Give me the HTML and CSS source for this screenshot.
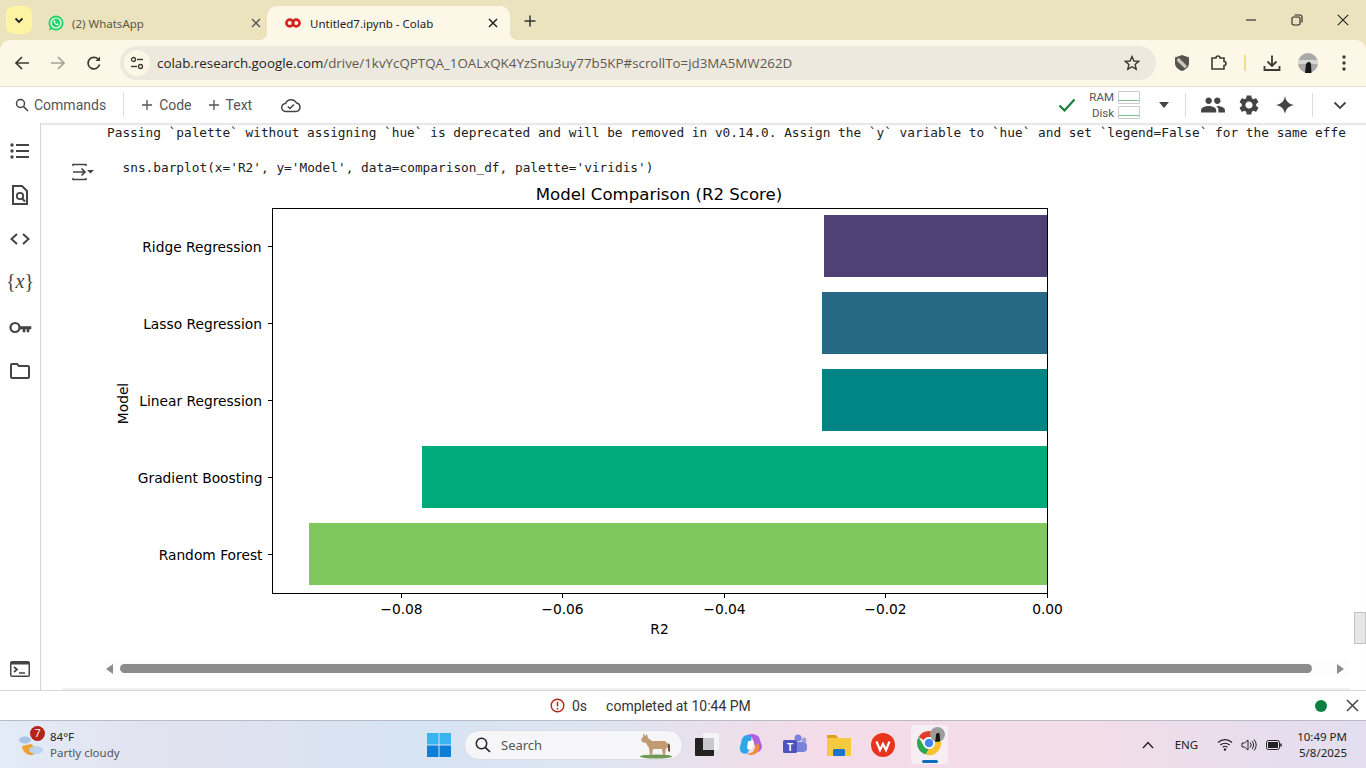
FILE: index.html
```html
<!DOCTYPE html>
<html lang="en">
<head>
    <meta charset="UTF-8">
    <meta name="viewport" content="width=device-width, initial-scale=1.0">
    <title>Untitled7.ipynb - Colab</title>
    <link rel="stylesheet" href="styles.css">
</head>
<body>

    <!-- Browser tabs -->
    <div class="tabstrip">
        <div class="tab-menu">
            <svg width="12" height="12" viewBox="0 0 12 12"><path d="M2.5 4.5 6 8l3.5-3.5" fill="none" stroke="#222" stroke-width="1.8"/></svg>
        </div>
        <div class="tab">
            <svg class="tab-icon" width="16" height="16" viewBox="0 0 16 16"><circle cx="8" cy="8" r="7.5" fill="#25d366"/><path d="M1 15.500 2.500 10.500 5.500 13.500Z" fill="#25d366"/><circle cx="8" cy="8" r="5" fill="none" stroke="#fff" stroke-width="1.2"/><path d="M5.800 5.600c.5-.6 1-.5 1.200 0l.4.9-.5.7c.4.8 1 1.300 1.800 1.700l.7-.6.9.5c.4.3.4.7 0 1.100-1.600 1.200-5.600-1.800-4.500-4.300Z" fill="#fff"/></svg>
            <span class="tab-title">(2) WhatsApp</span>
            <svg class="tab-close" width="10" height="10" viewBox="0 0 10 10"><path d="M1 1l8 8M9 1l-8 8" stroke="#555" stroke-width="1.4"/></svg>
        </div>
        <div class="tab active">
            <svg class="tab-icon" width="16" height="12" viewBox="0 0 16 12"><circle cx="4.800" cy="6" r="3.400" fill="none" stroke="#d3231c" stroke-width="2.600"/><circle cx="11.200" cy="6" r="3.400" fill="none" stroke="#d3231c" stroke-width="2.600"/></svg>
            <span class="tab-title">Untitled7.ipynb - Colab</span>
            <svg class="tab-close" width="10" height="10" viewBox="0 0 10 10"><path d="M1 1l8 8M9 1l-8 8" stroke="#222" stroke-width="1.5"/></svg>
        </div>
        <svg class="tab-new" width="12" height="12" viewBox="0 0 12 12"><path d="M6 .5v11M.5 6h11" stroke="#333" stroke-width="1.5"/></svg>
        <div class="win-controls">
            <svg width="12" height="12" viewBox="0 0 12 12"><path d="M1 6h10" stroke="#222" stroke-width="1.1"/></svg>
            <svg width="12" height="12" viewBox="0 0 12 12"><rect x="1" y="3" width="8" height="8" rx="1.500" fill="none" stroke="#222" stroke-width="1.1"/><path d="M3.500 1h5.500a2 2 0 0 1 2 2v5.500" fill="none" stroke="#222" stroke-width="1.1"/></svg>
            <svg width="12" height="12" viewBox="0 0 12 12"><path d="M.8.8l10.400 10.400M11.200.8.8 11.200" stroke="#222" stroke-width="1.1"/></svg>
        </div>
    </div>

    <!-- Address bar -->
    <div class="browserbar">
        <svg class="nav-icon" width="16" height="16" viewBox="0 0 16 16"><path d="M15 8H2M8 2 2 8l6 6" fill="none" stroke="#3d3a30" stroke-width="1.7"/></svg>
        <svg class="nav-icon" width="16" height="16" viewBox="0 0 16 16"><path d="M1 8h13M8 2l6 6-6 6" fill="none" stroke="#a5a294" stroke-width="1.7"/></svg>
        <svg class="nav-icon" width="16" height="16" viewBox="0 0 16 16"><path d="M13.500 9.500A5.800 5.800 0 1 1 12 4l1.500 1.500" fill="none" stroke="#3d3a30" stroke-width="1.7"/><path d="M14 1.500V6H9.500Z" fill="#3d3a30"/></svg>
        <div class="omnibox">
            <div class="site-info">
                <svg width="14" height="14" viewBox="0 0 14 14"><circle cx="3.500" cy="3.500" r="2" fill="none" stroke="#3d3a30" stroke-width="1.300"/><path d="M7 3.500h6" stroke="#3d3a30" stroke-width="1.400"/><circle cx="10.500" cy="10.500" r="2" fill="none" stroke="#3d3a30" stroke-width="1.300"/><path d="M1 10.500h6" stroke="#3d3a30" stroke-width="1.400"/></svg>
            </div>
            <span class="url">colab.research.google.com<span class="url-path">/drive/1kvYcQPTQA_1OALxQK4YzSnu3uy77b5KP#scrollTo=jd3MA5MW262D</span></span>
            <svg class="star" width="16" height="16" viewBox="0 0 16 16"><path d="M8 1.500 9.900 6l4.800.4-3.600 3.100 1.100 4.700L8 11.700l-4.200 2.500 1.100-4.700L1.300 6.400 6.100 6Z" fill="none" stroke="#3d3a30" stroke-width="1.400"/></svg>
        </div>
        <svg class="ext-shield" width="16" height="18" viewBox="0 0 16 18"><path d="M8 1 15 3.500V9c0 4-3 6.500-7 8-4-1.500-7-4-7-8V3.500Z" fill="#55534c"/><path d="M3 5l2-1 8 8-2 2.500L3 7Z" fill="#c9c7c0"/></svg>
        <svg class="ext-puzzle" width="18" height="18" viewBox="0 0 18 18"><path d="M2 4h4a2 2 0 0 1 4 0h4v3.500a2 2 0 0 1 0 4V15H2Z" fill="none" stroke="#3d3a30" stroke-width="1.600"/></svg>
        <span class="bar-sep"></span>
        <svg class="ext-down" width="18" height="18" viewBox="0 0 18 18"><path d="M9 1.500v10M4.500 7.500 9 12l4.500-4.500M1.500 12v4h15v-4" fill="none" stroke="#3d3a30" stroke-width="1.800"/></svg>
        <svg class="avatar" width="20" height="20" viewBox="0 0 20 20"><circle cx="10" cy="10" r="10" fill="#a9aaa8"/><path d="M0 9h20" stroke="#d6d6d4" stroke-width="4"/><path d="M7 20 8 11c2-3 5-2 5 0l.5 9Z" fill="#161616"/></svg>
        <svg class="kebab" width="4" height="16" viewBox="0 0 4 16"><circle cx="2" cy="2" r="1.700" fill="#3d3a30"/><circle cx="2" cy="8" r="1.700" fill="#3d3a30"/><circle cx="2" cy="14" r="1.700" fill="#3d3a30"/></svg>
    </div>

    <!-- Colab toolbar -->
    <div class="colabbar">
        <svg class="cmd-icon" width="14" height="14" viewBox="0 0 14 14"><circle cx="5.500" cy="5.500" r="4" fill="none" stroke="#444" stroke-width="1.500"/><path d="M8.500 8.500 13 13" stroke="#444" stroke-width="1.600"/></svg>
        <span class="bar-label">Commands</span>
        <span class="colab-sep"></span>
        <svg class="plus-code" width="10" height="10" viewBox="0 0 10 10"><path d="M5 0v10M0 5h10" stroke="#555" stroke-width="1.300"/></svg>
        <span class="bar-label plus-label">Code</span>
        <svg class="plus-text" width="10" height="10" viewBox="0 0 10 10"><path d="M5 0v10M0 5h10" stroke="#555" stroke-width="1.300"/></svg>
        <span class="bar-label plus-label">Text</span>
        <svg class="cloud" width="20" height="16" viewBox="0 0 20 16"><path d="M5 14.500a4 4 0 0 1-.5-8A6 6 0 0 1 15.500 6a4.300 4.300 0 0 1-.5 8.500Z" fill="none" stroke="#444" stroke-width="1.500"/><path d="M6.800 9.500 9 11.500l4-4" fill="none" stroke="#444" stroke-width="1.500"/></svg>
        <svg class="conn-check" width="18" height="14" viewBox="0 0 18 14"><path d="M1.500 7.500 6.500 12.500 16.500 1.500" fill="none" stroke="#188038" stroke-width="2.200"/></svg>
        <div class="ram-disk">
            <div class="meter-row"><span>RAM</span><span class="meter"></span></div>
            <div class="meter-row"><span>Disk</span><span class="meter"></span></div>
        </div>
        <svg class="caret" width="10" height="6" viewBox="0 0 10 6"><path d="M0 0h10L5 6Z" fill="#444"/></svg>
        <span class="colab-sep sep-a"></span>
        <svg class="tool-people" width="26" height="26" viewBox="0 0 24 24"><path fill="#444" d="M16 11c1.660 0 2.990-1.340 2.990-3S17.660 5 16 5c-1.660 0-3 1.340-3 3s1.340 3 3 3zm-8 0c1.660 0 2.990-1.340 2.990-3S9.660 5 8 5C6.340 5 5 6.340 5 8s1.340 3 3 3zm0 2c-2.330 0-7 1.170-7 3.500V19h14v-2.500c0-2.330-4.670-3.500-7-3.500zm8 0c-.29 0-.62.02-.97.05 1.160.84 1.970 1.970 1.970 3.450V19h6v-2.500c0-2.330-4.670-3.500-7-3.500z"/></svg>
        <svg class="tool-gear" width="24" height="24" viewBox="0 0 24 24"><path fill="#444" d="M19.140 12.940c.04-.3.06-.61.06-.94 0-.32-.02-.64-.07-.94l2.030-1.580c.18-.14.23-.41.12-.61l-1.920-3.320c-.12-.22-.37-.29-.59-.22l-2.390.96c-.5-.38-1.030-.7-1.620-.94l-.36-2.540c-.04-.24-.24-.41-.48-.41h-3.840c-.24 0-.43.17-.47.41l-.36 2.540c-.59.24-1.130.57-1.620.94l-2.390-.96c-.22-.08-.47 0-.59.22L2.740 8.870c-.12.21-.08.47.12.61l2.030 1.580c-.05.3-.09.63-.09.94s.02.64.07.94l-2.030 1.580c-.18.14-.23.41-.12.61l1.920 3.320c.12.22.37.29.59.22l2.390-.96c.5.38 1.030.7 1.620.94l.36 2.540c.05.24.24.41.48.41h3.840c.24 0 .44-.17.47-.41l.36-2.540c.59-.24 1.130-.56 1.620-.94l2.390.96c.22.08.47 0 .59-.22l1.920-3.320c.12-.22.07-.47-.12-.61l-2.010-1.580zM12 15.600c-1.980 0-3.600-1.620-3.600-3.600s1.620-3.600 3.600-3.600 3.600 1.620 3.600 3.600-1.620 3.600-3.600 3.600z"/></svg>
        <svg class="tool-spark" width="18" height="18" viewBox="0 0 18 18"><path fill="#444" d="M9 0c.8 5 3.500 8 9 9-5.500 1-8.200 4-9 9-.8-5-3.500-8-9-9 5.500-1 8.200-4 9-9Z"/></svg>
        <span class="colab-sep sep-b"></span>
        <svg class="collapse" width="14" height="9" viewBox="0 0 14 9"><path d="M1.500 1.500 7 7l5.500-5.500" fill="none" stroke="#444" stroke-width="1.800"/></svg>
    </div>

    <div class="main">
        <!-- Left rail -->
        <div class="rail">
            <div class="rail-item">
                <svg width="20" height="16" viewBox="0 0 20 16"><path d="M6 2h13M6 8h13M6 14h13" stroke="#444" stroke-width="2"/><circle cx="2" cy="2" r="1.700" fill="#444"/><circle cx="2" cy="8" r="1.700" fill="#444"/><circle cx="2" cy="14" r="1.700" fill="#444"/></svg>
            </div>
            <div class="rail-item">
                <svg width="18" height="20" viewBox="0 0 18 20"><path d="M2 1h9l5 5v13H2Z" fill="none" stroke="#444" stroke-width="2"/><circle cx="9" cy="11" r="3.200" fill="none" stroke="#444" stroke-width="1.800"/><path d="M11.200 13.500 14 16.500" stroke="#444" stroke-width="2"/></svg>
            </div>
            <div class="rail-item">
                <svg width="20" height="12" viewBox="0 0 20 12"><path d="M7 1 1.500 6 7 11M13 1l5.500 5L13 11" fill="none" stroke="#444" stroke-width="2"/></svg>
            </div>
            <div class="rail-item var-icon">{<i>x</i>}</div>
            <div class="rail-item">
                <svg width="23" height="13" viewBox="0 0 23 13"><circle cx="6" cy="6.500" r="4.500" fill="none" stroke="#444" stroke-width="2.200"/><path d="M10.500 5.500H22V8H20V11H18V8H16V11H14V8H10.500" fill="#444" stroke="#444" stroke-width=".6"/></svg>
            </div>
            <div class="rail-item">
                <svg width="20" height="16" viewBox="0 0 20 16"><path d="M1 2a1 1 0 0 1 1-1h5l2 2h9a1 1 0 0 1 1 1v10a1 1 0 0 1-1 1H2a1 1 0 0 1-1-1Z" fill="none" stroke="#444" stroke-width="2"/></svg>
            </div>
            <div class="rail-item terminal">
                <svg width="20" height="16" viewBox="0 0 20 16"><rect width="20" height="16" rx="2" fill="#444"/><rect x="1.500" y="3.500" width="17" height="11" fill="#fff"/><path d="M4 6l3 2.500L4 11M9 12h6" fill="none" stroke="#444" stroke-width="1.700"/></svg>
            </div>
        </div>

        <!-- Notebook cell output -->
        <div class="notebook">
            <div class="cell">
                <div class="gutter">
                    <svg width="22" height="18" viewBox="0 0 22 18"><path d="M1 3V1.500h13V3M1 15v1.500h13V15" fill="none" stroke="#444" stroke-width="1.500"/><path d="M1 9h12M9.500 5.500 13 9l-3.500 3.500" fill="none" stroke="#444" stroke-width="1.700"/><path d="M15 7h7l-3.500 3.500Z" fill="#444"/></svg>
                </div>
                <div class="output">
                    <pre class="stderr">Passing `palette` without assigning `hue` is deprecated and will be removed in v0.14.0. Assign the `y` variable to `hue` and set `legend=False` for the same effe</pre>
                    <pre class="stderr source">sns.barplot(x='R2', y='Model', data=comparison_df, palette='viridis')</pre>
                    <svg class="chart" width="970" height="466" viewBox="100 180 970 466">
                        <text class="chart-title" x="659" y="200" text-anchor="middle">Model Comparison (R2 Score)</text>
                        <rect x="824" y="215" width="223" height="62" fill="#4f4176"/>
                        <rect x="822" y="292" width="225" height="62" fill="#276984"/>
                        <rect x="822" y="369" width="225" height="62" fill="#008585"/>
                        <rect x="422" y="446" width="625" height="62" fill="#00aa7b"/>
                        <rect x="309" y="523" width="738" height="62" fill="#80c75d"/>
                        <rect x="272.500" y="208.500" width="775" height="385" fill="none" stroke="#000" stroke-width="1"/>
                        <path d="M268 246.500h4M268 323.500h4M268 400.500h4M268 477.500h4M268 554.500h4M401.500 594v4M562.500 594v4M724.500 594v4M885.500 594v4M1047.500 594v4" stroke="#000" stroke-width="1"/>
                        <text class="tick" x="261.500" y="252" text-anchor="end">Ridge Regression</text>
                        <text class="tick" x="262" y="329" text-anchor="end">Lasso Regression</text>
                        <text class="tick" x="262" y="406" text-anchor="end">Linear Regression</text>
                        <text class="tick" x="262.500" y="483" text-anchor="end">Gradient Boosting</text>
                        <text class="tick" x="262.500" y="560" text-anchor="end">Random Forest</text>
                        <text class="tick" x="401.500" y="614" text-anchor="middle">−0.08</text>
                        <text class="tick" x="562.500" y="614" text-anchor="middle">−0.06</text>
                        <text class="tick" x="724.500" y="614" text-anchor="middle">−0.04</text>
                        <text class="tick" x="885.500" y="614" text-anchor="middle">−0.02</text>
                        <text class="tick" x="1047.500" y="614" text-anchor="middle">0.00</text>
                        <text class="tick" x="659.500" y="634" text-anchor="middle">R2</text>
                        <text class="tick" transform="translate(128 403.500) rotate(-90)" text-anchor="middle">Model</text>
                    </svg>
                </div>
            </div>
            <div class="hscroll">
                <span class="arrow-left"></span>
                <span class="thumb"></span>
                <span class="arrow-right"></span>
            </div>
            <div class="cell-end"></div>
            <span class="vscroll"></span>
        </div>
    </div>

    <!-- Status bar -->
    <div class="statusbar">
        <svg width="15" height="15" viewBox="0 0 15 15"><circle cx="7.500" cy="7.500" r="6.300" fill="none" stroke="#b3261e" stroke-width="1.400"/><path d="M7.500 3.800v4.700M7.500 10v1.400" stroke="#b3261e" stroke-width="1.500"/></svg>
        <span class="elapsed">0s</span>
        <span class="completed">completed at 10:44 PM</span>
        <span class="dot"></span>
        <svg width="13" height="13" viewBox="0 0 13 13"><path d="M1 1l11 11M12 1 1 12" stroke="#444" stroke-width="1.500"/></svg>
    </div>

    <!-- Windows taskbar -->
    <div class="taskbar">
        <div class="weather">
            <div class="weather-icon">
                <svg width="28" height="28" viewBox="0 0 28 28"><path d="M4 16a9 9 0 0 0 17 4l-8-6Z" fill="#f0a030"/><ellipse cx="7" cy="10" rx="6" ry="3.600" fill="#a9c6e6"/><ellipse cx="18" cy="20" rx="7" ry="4" fill="#bcd4ee"/></svg>
                <span class="badge">7</span>
            </div>
            <div class="weather-text">
                <div class="temp">84°F</div>
                <div class="cond">Partly cloudy</div>
            </div>
        </div>
        <div class="task-center">
            <svg class="start" width="24" height="24" viewBox="0 0 24 24"><rect width="11.500" height="11.500" fill="#38b4ef"/><rect x="12.500" width="11.500" height="11.500" fill="#38b4ef"/><rect y="12.500" width="11.500" height="11.500" fill="#0f7fd6"/><rect x="12.500" y="12.500" width="11.500" height="11.500" fill="#0f7fd6"/></svg>
            <div class="search">
                <svg width="16" height="16" viewBox="0 0 16 16"><circle cx="6.500" cy="6.500" r="5.200" fill="none" stroke="#222" stroke-width="1.500"/><path d="M10.300 10.300 15 15" stroke="#222" stroke-width="1.700"/></svg>
                <span>Search</span>
                <svg class="donkey" width="34" height="28" viewBox="0 0 34 28"><ellipse cx="18" cy="25.500" rx="16" ry="2" fill="#6f9a55"/><path d="M5 2l2 3 2-2 1 4 4 3h13l3 3v4h-2l-1 7h-2l-1-6H15l-1 6h-2l-1-7-3-5-4-1-1-3 2-2Z" fill="#c29a74"/><path d="M30 12l2 2 0 7-2-1Z" fill="#6b5240"/></svg>
            </div>
            <svg class="task-app" width="24" height="23" viewBox="0 0 24 23"><rect x="8" y="0" width="16" height="17" fill="#f4f4f6"/><rect x="0" y="5" width="19" height="18" rx="1" fill="#222"/><rect x="8" y="5" width="11" height="12" fill="#c9c9cb"/></svg>
            <svg class="task-app" width="24" height="24" viewBox="0 0 24 24"><path d="M3 6c2-5 8-5 10-3l-4 17c-5 2-9-1-8-6Z" fill="#2fa6e8"/><path d="M9 2c4-2 8-1 11 2l3 9c0 3-2 6-5 6l-5-15Z" fill="#b25fe0"/><path d="M8 21c3 2 11 1 12-5 1-3 0-5-2-6l-4 9Z" fill="#f08a3c"/><path d="M9 8h6l-2 8H8Z" fill="#fff"/></svg>
            <svg class="task-app" width="24" height="22" viewBox="0 0 24 22"><circle cx="15" cy="4" r="3.500" fill="#7b83d8"/><circle cx="21" cy="6" r="2.500" fill="#9aa1e6"/><rect x="10" y="8" width="14" height="10" rx="4" fill="#7b83d8"/><rect x="0" y="6" width="14" height="13" rx="1.500" fill="#4b53bc"/><text class="teams-t" x="7" y="16.500" text-anchor="middle">T</text></svg>
            <svg class="task-app" width="24" height="22" viewBox="0 0 24 22"><path d="M0 1h9l2 3H24v18H0Z" fill="#f6c93e"/><path d="M0 1h9l2 3H0Z" fill="#d9a520"/><rect x="6" y="15" width="12" height="7" rx="1.500" fill="#1a74c8"/></svg>
            <svg class="task-app" width="24" height="24" viewBox="0 0 24 24"><circle cx="12" cy="12" r="12" fill="#e8341c"/><path d="M5.500 8.500 9 17l3-6 3 6 3.500-8.500" fill="none" stroke="#fff" stroke-width="2.200"/></svg>
            <div class="chrome-tile">
                <svg width="28" height="28" viewBox="0 0 28 28"><path d="M14 2a12 12 0 0 1 10.400 6H14a6 6 0 0 0-5.200 3L3.600 8A12 12 0 0 1 14 2Z" fill="#e33b2e"/><path d="M3.600 8l5.200 9a6 6 0 0 0 5.200 3l-3.200 5.600A12 12 0 0 1 3.600 8Z" fill="#2fa84f"/><path d="M24.400 8A12 12 0 0 1 10.800 25.600L14 20a6 6 0 0 0 5.200-9l-1-3Z" fill="#f7c12f"/><circle cx="14" cy="14" r="5" fill="#3f86f0" stroke="#fff" stroke-width="1.500"/></svg>
                <svg class="chrome-avatar" width="15" height="15" viewBox="0 0 20 20"><circle cx="10" cy="10" r="10" fill="#9c9d9b"/><path d="M7 20 8 10c2-3 5-2 5 0l.5 9Z" fill="#161616"/></svg>
                <span class="running"></span>
            </div>
        </div>
        <div class="tray">
            <svg class="tray-up" width="12" height="8" viewBox="0 0 12 8"><path d="M1 7l5-5.500L11 7" fill="none" stroke="#222" stroke-width="1.400"/></svg>
            <span class="lang">ENG</span>
            <svg class="tray-wifi" width="16" height="13" viewBox="0 0 16 13"><path d="M1 4.500a10 10 0 0 1 14 0M3.300 7a7 7 0 0 1 9.400 0M5.500 9.300a3.800 3.800 0 0 1 5 0" fill="none" stroke="#222" stroke-width="1.100"/><circle cx="8" cy="11.500" r="1.200" fill="#222"/></svg>
            <svg class="tray-sound" width="16" height="14" viewBox="0 0 16 14"><path d="M1 5h2.500L7 2v10L3.500 9H1Z" fill="none" stroke="#222" stroke-width="1"/><path d="M9 4.500a3.500 3.500 0 0 1 0 5M11 3a6 6 0 0 1 0 8M13 1.500a8 8 0 0 1 0 11" fill="none" stroke="#222" stroke-width="1"/></svg>
            <svg class="tray-batt" width="16" height="10" viewBox="0 0 16 10"><rect x=".5" y=".5" width="13" height="9" rx="2" fill="none" stroke="#222"/><rect x="2" y="2" width="10" height="6" fill="#222"/><rect x="14.200" y="3.500" width="1.500" height="3" fill="#222"/></svg>
            <div class="clock">
                <div>10:49 PM</div>
                <div>5/8/2025</div>
            </div>
        </div>
    </div>

</body>
</html>
```

FILE: styles.css
```css
* {
    box-sizing: border-box;
}
html, body {
    height: 100%;
}
body {
    margin: 0;
    width: 1366px;
    height: 768px;
    overflow: hidden;
    display: flex;
    flex-direction: column;
    background: #ebe3bd;
    font-family: Roboto, Arial, sans-serif;
    color: #333;
}
svg {
    display: block;
    flex: none;
}

/* browser tabs */
.tabstrip {
    height: 40px;
    flex: none;
    display: flex;
    align-items: flex-start;
    padding: 6px 0 0 6px;
    background: #ebe3bd;
}
.tab-menu {
    width: 26px;
    height: 28px;
    margin-right: 2px;
    display: flex;
    align-items: center;
    justify-content: center;
    background: #fdf3a3;
    border-radius: 8px;
}
.tab {
    width: 233px;
    height: 34px;
    display: flex;
    align-items: center;
    padding: 0 6px 0 14px;
    font-family: "Noto Sans", Arial, sans-serif;
    font-size: 11.5px;
    color: #5a5848;
}
.tab-icon {
    margin-right: 8px;
}
.tab.active {
    position: relative;
    width: 243px;
    padding-left: 18px;
    padding-right: 12px;
    background: #fdf7e8;
    border-radius: 10px 10px 0 0;
    color: #222;
}
.tab.active .tab-icon {
    margin-right: 9px;
}
.tab.active::before,
.tab.active::after {
    content: "";
    position: absolute;
    bottom: 0;
    width: 8px;
    height: 8px;
}
.tab.active::before {
    left: -8px;
    background: radial-gradient(circle at 0 0, transparent 8px, #fdf7e8 8px);
}
.tab.active::after {
    right: -8px;
    background: radial-gradient(circle at 100% 0, transparent 8px, #fdf7e8 8px);
}
.tab-title {
    flex: 1;
}
.tab-new {
    margin: 9px 0 0 14px;
}
.win-controls {
    margin-left: auto;
    display: flex;
    gap: 34px;
    padding: 8px 17px 0 0;
}

/* address bar */
.browserbar {
    height: 47px;
    flex: none;
    display: flex;
    align-items: center;
    padding: 0 0 0 14px;
    background: #fdf7e8;
    border-bottom: 1px solid #e2e0d6;
    border-radius: 10px 10px 0 0;
}
.nav-icon {
    margin-right: 20px;
}
.omnibox {
    width: 1036px;
    height: 34px;
    margin-left: -2px;
    display: flex;
    align-items: center;
    padding: 0 16px 0 4px;
    background: #eee9df;
    border-radius: 17px;
}
.site-info {
    width: 26px;
    height: 26px;
    margin-right: 7px;
    display: flex;
    align-items: center;
    justify-content: center;
    background: #fdf7e8;
    border-radius: 50%;
}
.url {
    flex: 1;
    font-family: "Open Sans", Arial, sans-serif;
    font-size: 13.35px;
    color: #26241c;
    white-space: nowrap;
}
.url-path {
    color: #5c5a50;
}
.ext-shield {
    margin-left: 18px;
}
.ext-puzzle {
    margin-left: 20px;
}
.bar-sep {
    width: 2px;
    height: 16px;
    margin: 0 17px 0 16px;
    background: #efe08a;
}
.avatar {
    margin-left: 17px;
}
.kebab {
    margin-left: 24px;
}

/* colab toolbar */
.colabbar {
    height: 36px;
    flex: none;
    display: flex;
    align-items: center;
    padding: 0 19px 0 15px;
    background: #fff;
    font-size: 14px;
    color: #555;
}
.bar-label {
    white-space: nowrap;
}
.cmd-icon {
    margin-right: 5px;
}
.colab-sep {
    width: 1px;
    height: 24px;
    margin-left: 17px;
    background: #ddd;
}
.plus-code {
    margin-left: 18px;
}
.plus-text {
    margin-left: 17px;
}
.plus-label {
    margin-left: 7px;
}
.cloud {
    margin-left: 29px;
}
.conn-check {
    margin-left: auto;
}
.ram-disk {
    width: 56px;
    margin-left: 8px;
    font-size: 11.5px;
    color: #555;
}
.meter-row {
    display: flex;
    justify-content: flex-end;
    align-items: center;
    gap: 4px;
    height: 15.5px;
}
.meter {
    width: 22px;
    height: 13px;
    flex: none;
    background: linear-gradient(#fff 70%, #7fbf95 70%, #7fbf95 80%, #fff 80%);
    border: 1px solid #ccc;
    border-radius: 1px;
}
.caret {
    margin-left: 19px;
}
.sep-a {
    margin-left: 16px;
}
.tool-people {
    margin-left: 14px;
}
.tool-gear {
    margin-left: 11px;
}
.tool-spark {
    margin-left: 15px;
}
.sep-b {
    margin-left: 18px;
}
.collapse {
    margin-left: 20px;
}

/* main area */
.main {
    flex: 1;
    min-height: 0;
    display: flex;
    background: #fff;
}
.rail {
    width: 41px;
    flex: none;
    display: flex;
    flex-direction: column;
    padding-top: 6px;
    border-right: 1px solid #d4d4d4;
}
.rail-item {
    height: 44px;
    flex: none;
    display: flex;
    align-items: center;
    justify-content: center;
}
.var-icon {
    padding-bottom: 3px;
    font-family: "Liberation Serif", serif;
    font-size: 20px;
    color: #444;
}
.terminal {
    height: 42px;
    margin-top: auto;
}
.notebook {
    position: relative;
    flex: 1;
    min-width: 0;
    display: flex;
    flex-direction: column;
    overflow: hidden;
    box-shadow: inset 0 3px 2px -1px #e6e6e6;
}
.cell {
    flex: 1;
    min-height: 0;
    display: flex;
}
.gutter {
    width: 66px;
    flex: none;
    padding: 40px 0 0 31px;
}
.output {
    flex: 1;
    min-width: 0;
    overflow: hidden;
    padding-top: 3px;
}
.stderr {
    margin: 0;
    height: 14px;
    line-height: 14px;
    font-family: "DejaVu Sans Mono", monospace;
    font-size: 12.79px;
    color: #212121;
    white-space: pre;
}
.source {
    margin-top: 21px;
    padding-left: 15.5px;
}
.chart {
    margin: 5px 0 0 -7px;
}
.chart-title {
    font-family: "DejaVu Sans", sans-serif;
    font-size: 16.6px;
    fill: #000;
}
.tick {
    font-family: "DejaVu Sans", sans-serif;
    font-size: 13.8px;
    fill: #000;
}

/* scrollbars */
.hscroll {
    height: 15px;
    flex: none;
    margin: 0 17px 0 63px;
    display: flex;
    align-items: center;
    background: #fdfdfd;
}
.thumb {
    width: 1192px;
    height: 9px;
    margin: 0 25px 0 7px;
    background: #8c8c8c;
    border-radius: 5px;
}
.arrow-left {
    margin-left: 2px;
    border-style: solid;
    border-width: 5px 7px 5px 0;
    border-color: transparent #8c8c8c transparent transparent;
}
.arrow-right {
    border-style: solid;
    border-width: 5px 0 5px 7px;
    border-color: transparent transparent transparent #8c8c8c;
}
.cell-end {
    height: 14px;
    flex: none;
    margin-left: 21px;
    margin-right: 16px;
    border-bottom: 2px solid #f0f0f0;
}
.vscroll {
    position: absolute;
    right: 0;
    top: 489px;
    width: 12px;
    height: 32px;
    background: #e6e6e6;
    border: 1px solid #c4c4c4;
}

/* status bar */
.statusbar {
    height: 30px;
    flex: none;
    display: flex;
    align-items: center;
    padding-left: 550px;
    border-top: 1px solid #d8d8d8;
    background: #fff;
    font-size: 14px;
    color: #333;
}
.elapsed {
    margin-left: 7px;
}
.completed {
    margin-left: 19px;
}
.dot {
    width: 12px;
    height: 12px;
    margin-left: 564px;
    margin-right: 19px;
    background: #0b8043;
    border-radius: 50%;
}

/* windows taskbar */
.taskbar {
    height: 48px;
    flex: none;
    display: flex;
    align-items: center;
    border-top: 1px solid #b9bcc4;
    background: linear-gradient(90deg, #e2ebf7 0%, #e3e2ef 12%, #d6e4f3 30%, #dde5f2 42%, #f4dce8 60%, #f2dde9 80%, #e2deef 100%);
}
.weather {
    width: 427px;
    flex: none;
    display: flex;
    align-items: center;
    padding-left: 18px;
}
.weather-icon {
    position: relative;
    width: 32px;
    height: 30px;
}
.badge {
    position: absolute;
    left: 12px;
    top: -4px;
    width: 15px;
    height: 15px;
    background: #b5231a;
    border-radius: 50%;
    color: #fff;
    font-size: 11px;
    line-height: 15px;
    text-align: center;
}
.weather-text {
    font-family: "Noto Sans", Arial, sans-serif;
    font-size: 11.5px;
    line-height: 16px;
    color: #222;
}
.cond {
    color: #555;
}
.task-center {
    display: flex;
    align-items: center;
}
.search {
    width: 219px;
    height: 30px;
    margin: 0 12px 0 13px;
    display: flex;
    align-items: center;
    padding: 0 10px;
    background: #f6f6f9;
    border: 1px solid #dcdce4;
    border-radius: 15px;
    font-family: "Noto Sans", Arial, sans-serif;
    font-size: 13px;
    color: #555;
}
.search span {
    flex: 1;
    margin-left: 10px;
}
.task-app {
    margin-right: 20px;
}
.chrome-tile {
    position: relative;
    width: 37px;
    height: 39px;
    margin-left: -4px;
    padding: 4px 0 0 4px;
    background: #f7eef4;
    border-radius: 4px;
}
.chrome-avatar {
    position: absolute;
    right: 3px;
    top: 2px;
}
.running {
    position: absolute;
    left: 11px;
    bottom: 1px;
    width: 16px;
    height: 3px;
    background: #0f6cbd;
    border-radius: 2px;
}
.tray {
    margin-left: auto;
    display: flex;
    align-items: center;
    padding-right: 19px;
    font-family: "Noto Sans", Arial, sans-serif;
    font-size: 11.5px;
    color: #222;
}
.lang {
    margin-left: 21px;
}
.tray-wifi {
    margin-left: 19px;
}
.tray-sound {
    margin-left: 8px;
}
.tray-batt {
    margin-left: 9px;
}
.clock {
    margin-left: 15px;
    text-align: right;
    line-height: 16px;
}
.teams-t {
    font-family: "Liberation Sans", sans-serif;
    font-size: 10px;
    font-weight: bold;
    fill: #fff;
}
```
